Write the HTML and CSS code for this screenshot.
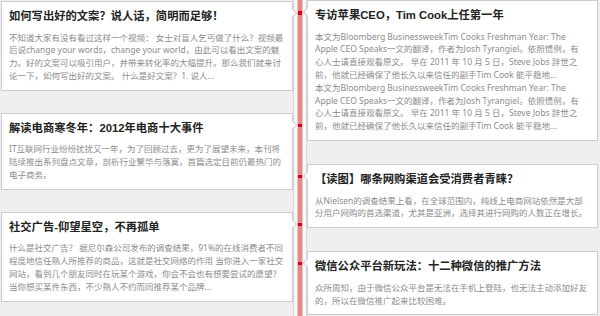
FILE: index.html
```html
<!DOCTYPE html>
<html>
<head>
	<title>文章时间线</title>
	<meta charset="utf-8">
	<link rel="stylesheet" href="styles.css">
</head>
<body>
	<div class="timeline">
		<div class="col col-left">
			<div class="item">
				<h3>如何写出好的文案？说人话，简明而足够！</h3>
				<p>不知道大家有没有看过这样一个视频： 女士对盲人乞丐做了什么？视频最<br>后说change your words，change your world，由此可以看出文案的魅<br>力。好的文案可以吸引用户，并带来转化率的大幅提升。那么我们就来讨<br>论一下，如何写出好的文案。 什么是好文案？1. 说人...</p>
			</div>
			<div class="item">
				<h3>解读电商寒冬年：2012年电商十大事件</h3>
				<p>IT互联网行业纷纷扰扰又一年，为了回顾过去，更为了展望未来，本刊将<br>陆续推出系列盘点文章，剖析行业繁华与落寞，首篇选定目前仍最热门的<br>电子商务。</p>
			</div>
			<div class="item">
				<h3>社交广告-仰望星空，不再孤单</h3>
				<p>什么是社交广告？ 据尼尔森公司发布的调查结果，91%的在线消费者不同<br>程度地信任熟人所推荐的商品，这就是社交网络的作用 当你进入一家社交<br>网站，看到几个朋友同时在玩某个游戏，你会不会也有想要尝试的愿望？<br>当你想买某件东西，不少熟人不约而同推荐某个品牌...</p>
			</div>
		</div>

		<div class="track"></div>

		<div class="col col-right">
			<div class="item">
				<h3>专访苹果CEO，Tim Cook上任第一年</h3>
				<p>本文为Bloomberg BusinessweekTim Cooks Freshman Year: The<br>Apple CEO Speaks一文的翻译，作者为Josh Tyrangiel。依照惯例，有<br>心人士请直接观看原文。 早在 2011 年 10 月 5 日，Steve Jobs 辞世之<br>前，他就已经确保了他长久以来信任的副手Tim Cook 能平稳地...<br>本文为Bloomberg BusinessweekTim Cooks Freshman Year: The<br>Apple CEO Speaks一文的翻译，作者为Josh Tyrangiel。依照惯例，有<br>心人士请直接观看原文。 早在 2011 年 10 月 5 日，Steve Jobs 辞世之<br>前，他就已经确保了他长久以来信任的副手Tim Cook 能平稳地...</p>
			</div>
			<div class="item">
				<h3>【读图】哪条网购渠道会受消费者青睐？</h3>
				<p>从Nielsen的调查结果上看，在全球范围内，纯线上电商网站依然是大部<br>分用户网购的首选渠道，尤其是亚洲，选择其进行网购的人数正在增长。</p>
			</div>
			<div class="item">
				<h3>微信公众平台新玩法：十二种微信的推广方法</h3>
				<p>众所周知，由于微信公众平台是无法在手机上登陆，也无法主动添加好友<br>的，所以在微信推广起来比较困难。</p>
			</div>
		</div>
	</div>
</body>
</html>
```

FILE: styles.css
```css
body { margin: 0; padding: 0; background: #EFEFEF; overflow: hidden; font-family: "Noto Sans", "Noto Sans CJK SC", sans-serif; }

.timeline { display: grid; grid-template-columns: 292px 14px 291px; padding-left: 1px; min-height: 100vh; }

.col { display: flex; flex-direction: column; align-items: stretch; }
.col-left { padding-top: 1px; gap: 22px; }
.col-right { gap: 23px; }

/* the centre line */
.track {
	border-left: 1px solid #D6D6DF;
	border-right: 1px solid #D6D6DF;
	background: linear-gradient(to right, transparent 3px, #F1C3C3 3px, #F1C3C3 4px, #E28B8B 4px, #E28B8B 8px, #F1C3C3 8px, #F1C3C3 9px, transparent 9px), #F7F7F7;
}

.item { position: relative; background: #FFFFFF; border: 1px solid #CACBD7; padding: 6px 7px 7px; }
.item h3 { margin: 0 0 7.6px; font-family: "Liberation Sans", "Noto Sans CJK SC", sans-serif; font-size: 11.3px; line-height: 16px; font-weight: bold; color: #222222; white-space: nowrap; }
.item p { margin: 0; font-size: 8.5px; line-height: 12.8px; color: #8C8C8C; white-space: nowrap; }

/* arrow pointing at the line */
.item:before {
	content: "";
	position: absolute;
	top: 8px;
	width: 5px;
	height: 5px;
	background: #FFFFFF;
	transform: rotate(45deg);
}
.col-left .item:before { right: -4px; border-top: 1px solid #CACBD7; border-right: 1px solid #CACBD7; }
.col-right .item:before { left: -4px; border-bottom: 1px solid #CACBD7; border-left: 1px solid #CACBD7; }

/* red dot on the line */
.item:after { content: ""; position: absolute; top: 10px; width: 4px; height: 3px; background: #D8000C; }
.col-left .item:after { right: -10px; }
.col-right .item:after { left: -10px; }
```
